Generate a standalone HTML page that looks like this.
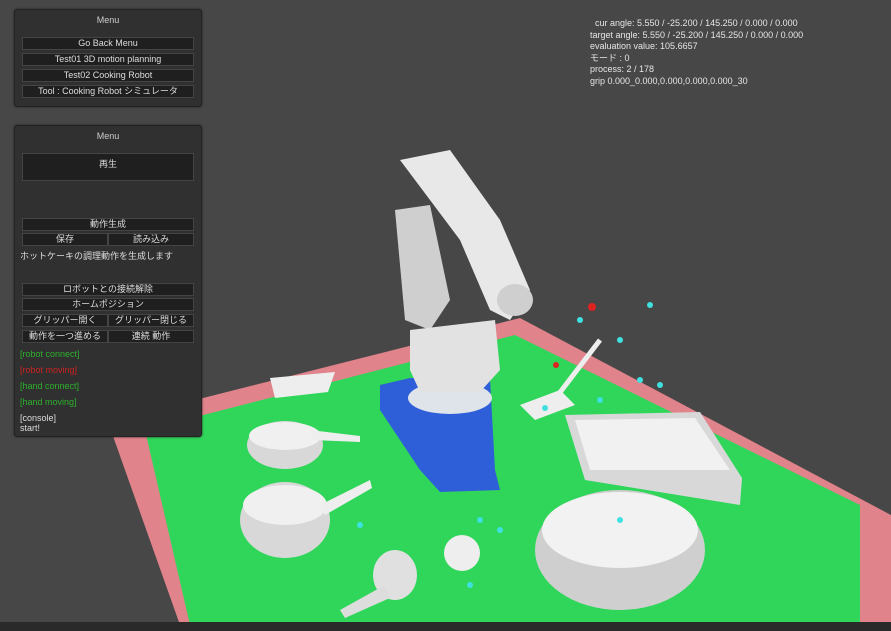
<!DOCTYPE html>
<html><head><meta charset="utf-8"><style>
body{margin:0;width:891px;height:631px;overflow:hidden;background:#474747;font-family:"Liberation Sans","Noto Sans CJK JP",sans-serif;position:relative}
.p{position:absolute;background:#303030;border:1px solid #222;border-radius:3px;box-shadow:0 0 2px #222}
.t{color:#ccc;font-size:9px;text-align:center}
.b{position:absolute;background:#1f1f1f;border:1px solid #444;color:#ddd;font-size:9px;text-align:center;line-height:11px;height:11px}
.info{position:absolute;left:590px;top:18px;color:#e6e6e6;font-size:9px;line-height:11.5px}
.g{position:absolute;left:20px;font-size:9px;color:#2db12d}
</style></head><body>
<svg width="891" height="631" style="position:absolute;left:0;top:0">
<polygon points="108,422 520,318 891,515 891,625 180,625" fill="#e0838b"/>
<polygon points="145,430 515,335 860,505 860,625 190,625" fill="#2fd65a"/>
<path d="M380,385 L410,378 L490,378 L495,470 L500,490 L440,492 L420,470 L380,410Z" fill="#2f5fd8"/>
<ellipse cx="450" cy="398" rx="42" ry="16" fill="#dfe3ea"/>
<path d="M400,160 L450,150 L500,220 L530,290 L510,320 L490,310 L460,240 Z" fill="#e8e8e8"/>
<path d="M395,210 L430,205 L450,300 L430,330 L405,320 Z" fill="#cfcfcf"/>
<path d="M410,330 L495,320 L500,370 L480,392 L420,392 L410,370Z" fill="#e2e2e2"/>
<ellipse cx="515" cy="300" rx="18" ry="16" fill="#cfcfcf"/>
<polygon points="565,415 700,412 742,478 740,505 585,480" fill="#d8d8d8"/>
<polygon points="575,420 695,418 730,470 590,470" fill="#f1f1f1"/>
<ellipse cx="620" cy="550" rx="85" ry="60" fill="#cfcfcf"/>
<ellipse cx="620" cy="530" rx="78" ry="38" fill="#f2f2f2"/>
<ellipse cx="285" cy="445" rx="38" ry="24" fill="#d8d8d8"/>
<ellipse cx="285" cy="436" rx="36" ry="14" fill="#f0f0f0"/>
<path d="M310,430 L360,436 L360,442 L312,440Z" fill="#eee"/>
<ellipse cx="285" cy="520" rx="45" ry="38" fill="#d8d8d8"/>
<ellipse cx="285" cy="505" rx="42" ry="20" fill="#f0f0f0"/>
<path d="M320,505 L370,480 L372,488 L325,515Z" fill="#eee"/>
<ellipse cx="395" cy="575" rx="22" ry="25" fill="#e0e0e0"/>
<path d="M340,610 L385,585 L390,598 L345,618Z" fill="#ddd"/>
<ellipse cx="462" cy="553" rx="18" ry="18" fill="#eee"/>
<polygon points="270,378 335,372 328,392 275,398" fill="#eee"/>
<polygon points="520,405 560,390 575,405 535,420" fill="#eee"/>
<path d="M558,395 L600,340" stroke="#eee" stroke-width="5"/>
<g fill="#3fe0e0">
<circle cx="580" cy="320" r="3"/><circle cx="620" cy="340" r="3"/><circle cx="650" cy="305" r="3"/><circle cx="600" cy="400" r="3"/><circle cx="640" cy="380" r="3"/><circle cx="660" cy="385" r="3"/><circle cx="480" cy="520" r="3"/><circle cx="360" cy="525" r="3"/><circle cx="470" cy="585" r="3"/><circle cx="500" cy="530" r="3"/><circle cx="545" cy="408" r="3"/><circle cx="620" cy="520" r="3"/>
</g>
<circle cx="592" cy="307" r="4" fill="#d22"/><circle cx="556" cy="365" r="3" fill="#d22"/>
<rect x="0" y="622" width="891" height="9" fill="#2a2a2a"/>
</svg>
<div class="p" style="left:14px;top:9px;width:186px;height:96px"><div class="t" style="margin-top:5px">Menu</div></div>
<div class="b" style="left:22px;top:37px;width:170px">Go Back Menu</div>
<div class="b" style="left:22px;top:53px;width:170px">Test01 3D motion planning</div>
<div class="b" style="left:22px;top:69px;width:170px">Test02 Cooking Robot</div>
<div class="b" style="left:22px;top:85px;width:170px">Tool : Cooking Robot シミュレータ</div>
<div class="p" style="left:14px;top:125px;width:186px;height:310px"><div class="t" style="margin-top:5px">Menu</div></div>
<div class="b" style="left:22px;top:153px;width:170px;height:26px;line-height:20px">再生</div>
<div class="b" style="left:22px;top:218px;width:170px">動作生成</div>
<div class="b" style="left:22px;top:233px;width:84px">保存</div>
<div class="b" style="left:108px;top:233px;width:84px">読み込み</div>
<div style="position:absolute;left:20px;top:249px;color:#ddd;font-size:9px">ホットケーキの調理動作を生成します</div>
<div class="b" style="left:22px;top:283px;width:170px">ロボットとの接続解除</div>
<div class="b" style="left:22px;top:298px;width:170px">ホームポジション</div>
<div class="b" style="left:22px;top:314px;width:84px">グリッパー開く</div>
<div class="b" style="left:108px;top:314px;width:84px">グリッパー閉じる</div>
<div class="b" style="left:22px;top:330px;width:84px">動作を一つ進める</div>
<div class="b" style="left:108px;top:330px;width:84px">連続 動作</div>
<div class="g" style="top:349px">[robot connect]</div>
<div class="g" style="top:365px;color:#c22">[robot moving]</div>
<div class="g" style="top:381px">[hand connect]</div>
<div class="g" style="top:397px">[hand moving]</div>
<div class="g" style="top:413px;color:#ddd;line-height:10px">[console]<br>start!</div>
<div class="info">&nbsp;&nbsp;cur angle: 5.550 / -25.200 / 145.250 / 0.000 / 0.000<br>target angle: 5.550 / -25.200 / 145.250 / 0.000 / 0.000<br>evaluation value: 105.6657<br>モード : 0<br>process: 2 / 178<br>grip 0.000_0.000,0.000,0.000,0.000_30</div>
</body></html>
